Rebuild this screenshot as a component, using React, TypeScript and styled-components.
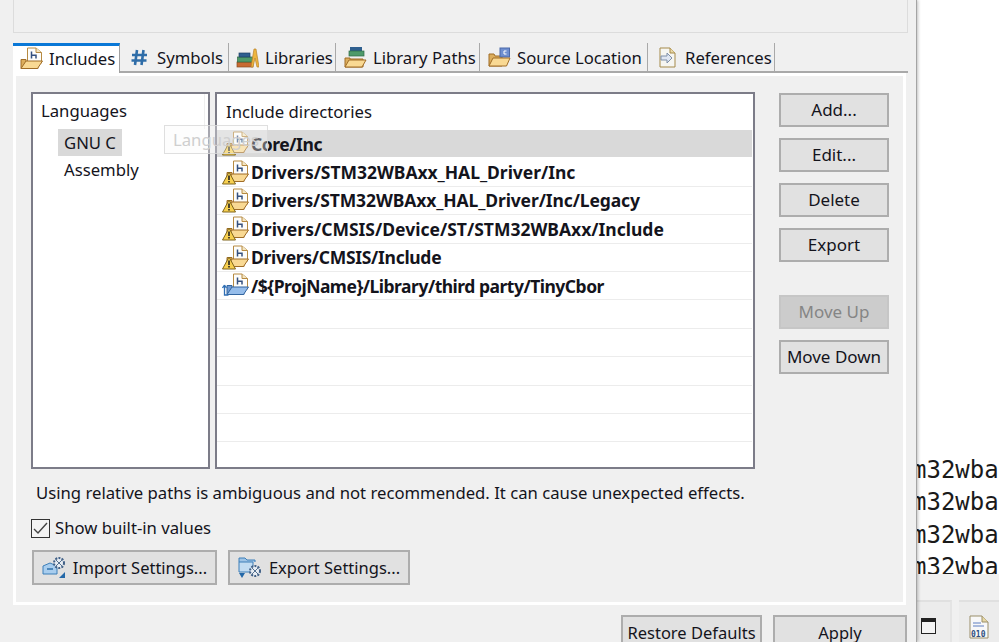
import React from "react";
import styled, { createGlobalStyle } from "styled-components";

const Global = createGlobalStyle`
  html, body { margin: 0; padding: 0; background: #f0f0f0; }
  body { font-family: "Noto Sans", "Open Sans", sans-serif; color: #14141c; }
`;

const Screen = styled.div`
  width: 999px; height: 642px; display: flex; overflow: hidden; font-size: 16.7px;
`;
const Dialog = styled.div`
  width: 916px; flex: none; height: 642px; box-sizing: border-box; padding: 0 8px 0 13px;
  background: #f0f0f0; display: flex; flex-direction: column; position: relative; z-index: 1;
  box-shadow: 1px 0 0 #a4a4a4, 2px 0 3px rgba(0, 0, 0, 0.25);
`;
const TopGroup = styled.div`
  height: 33px; flex: none; box-sizing: border-box;
  border: 1px solid #dcdcdc; border-top: 0;
`;
const TabBar = styled.div`
  margin-top: 10px; height: 30px; flex: none; display: flex; box-sizing: border-box;
  border-bottom: 2px solid #a9a9a9; font-size: 16.7px;
`;
const Tab = styled.div<{ $w: number; $active?: boolean; $gap: number; $pad: number }>`
  width: ${(p) => p.$w}px; flex: none; box-sizing: border-box; display: flex; align-items: center;
  gap: ${(p) => p.$gap}px; padding-left: ${(p) => p.$pad}px; white-space: nowrap;
  border-right: 1px solid #a9a9a9;
  ${(p) => p.$active
    ? `background:#fff;border-top:3px solid #0a78d7;height:30px;margin-bottom:-2px;padding-bottom:3px;border-right:1px solid #a0a0a0;`
    : `height:28px;`}
`;
const Panel = styled.div`
  margin-right: 2px; height: 532px; flex: none; box-sizing: border-box;
  border: 3px solid #fff; padding: 16px 0 0 15px; background: #f0f0f0; position: relative;
`;
const Lists = styled.div`
  display: flex; align-items: flex-start;
`;
const ListBox = styled.div<{ $w: number; $gap?: number }>`
  width: ${(p) => p.$w}px; height: 377px; flex: none; box-sizing: border-box; background: #fff;
  border: 2px solid #7c7c88; margin-right: ${(p) => p.$gap ?? 0}px; overflow: hidden;
`;
const LangHead = styled.div`
  height: 35px; line-height: 33px; padding-left: 8px; width: 163px; border-right: 1px solid #efefef;
`;
const LangItem = styled.div<{ $sel?: boolean }>`
  margin-left: 25px; width: fit-content; height: 27px; line-height: 27px; padding: 0 6px;
  background: ${(p) => (p.$sel ? "#d9d9d9" : "transparent")};
`;
const TreeHead = styled.div`
  height: 36px; line-height: 35px; padding-left: 9px;
`;
const TreeRow = styled.div<{ $sel?: boolean; $track: number }>`
  height: 28.4px; box-sizing: border-box; display: flex; align-items: center; margin-right: 1px;
  padding-left: 5px; gap: 2px; font-weight: 700; font-size: 17.5px; white-space: nowrap;
  letter-spacing: ${(p) => p.$track}px;
  background: ${(p) => (p.$sel ? "#d9d9d9" : "#fff")};
  border-bottom: 1px solid ${(p) => (p.$sel ? "#fff" : "#ececec")};
`;
const SideButtons = styled.div`
  margin-left: 24px; padding-top: 1px; display: flex; flex-direction: column; width: 110px; gap: 11px;
  font-size: 17px;
`;
const Btn = styled.div<{ $off?: boolean; $w?: number; $h?: number }>`
  width: ${(p) => (p.$w ? `${p.$w}px` : "100%")}; height: ${(p) => p.$h ?? 34}px; flex: none;
  box-sizing: border-box; display: flex; align-items: center; justify-content: center; gap: 7px;
  white-space: nowrap; padding-bottom: 1px;
  background: ${(p) => (p.$off ? "#cccccc" : "#e1e1e1")};
  border: 2px solid ${(p) => (p.$off ? "#c6c6c6" : "#adadad")};
  color: ${(p) => (p.$off ? "#858585" : "#14141c")};
`;
const Spacer = styled.div`height: 11px;`;
const Message = styled.div`
  margin-top: 12px; padding-left: 5px; height: 24px; line-height: 24px; white-space: nowrap;
`;
const CheckRow = styled.div`
  margin-top: 14px; display: flex; align-items: flex-start; gap: 5px; height: 20px; line-height: 18px;
`;
const Check = styled.div`
  width: 19px; height: 19px; box-sizing: border-box; background: #f4f4f4; border: 1.5px solid #333;
  display: flex; align-items: center; justify-content: center;
`;
const SettingsRow = styled.div`
  margin-top: 11px; margin-left: 1px; display: flex; gap: 11px; font-size: 16.5px;
`;
const Ghost = styled.div`
  position: absolute; left: 148px; top: 49px; width: 104px; height: 29px; box-sizing: border-box;
  background: rgba(250, 250, 250, 0.35); border: 1px solid rgba(215, 215, 215, 0.8);
  color: #cfcfcf; padding-left: 8px; line-height: 27px; overflow: hidden;
`;
const Footer = styled.div`
  margin-top: 10px; display: flex; justify-content: flex-end; gap: 11px; padding-right: 1px;
  font-size: 16.5px;
`;
const Editor = styled.div`
  flex: 1; min-width: 0; display: flex; flex-direction: column; background: #fff;
`;
const Code = styled.div`
  height: 574px; flex: none; box-sizing: border-box; padding-top: 454px; overflow: hidden; background: #fff;
  font-family: "DejaVu Sans Mono", monospace; font-size: 24px; line-height: 32.3px; white-space: nowrap;
  text-indent: -4px; color: #1a1a1a;
`;
const StatusArea = styled.div`
  flex: 1; background: #f0f0f0; padding-top: 26px; display: flex; gap: 7px; box-sizing: border-box;
`;
const StatusCell = styled.div<{ $w: number }>`
  width: ${(p) => p.$w}px; flex: none; box-sizing: border-box; border-top: 2px solid #e0e0e0;
  border-right: 2px solid #e4e4e4; padding-top: 16px; display: flex; background: #ececec;
`;
const WindowIcon = styled.div`
  width: 15px; height: 16px; box-sizing: border-box; border: 1.5px solid #222; border-top-width: 4px;
  margin-left: 5px; background: #f4f4f4;
`;

const HPage = () => (
  <>
    <path d="M8.5 1H17l5.5 4.5V16H8.5z" fill="#fdfdfb" stroke="#b68a42" />
    <path d="M17 1v4.5h5.5" fill="#f4e6c2" stroke="#b68a42" />
    <path d="M12.5 4.5v7M12.5 8.2h4.5v3.3" fill="none" stroke="#34507f" strokeWidth="1.5" />
  </>
);
const Folder = ({ blue }: { blue?: boolean }) => (
  <>
    <path d="M2 21.5v-9h5v2h12v7z" fill={blue ? "#6f9ad2" : "#dcae5d"} stroke={blue ? "#33659f" : "#a06d27"} />
    <path d="M2 21.5l5-7.5h16.5l-5 7.5z" fill={blue ? "#96bdea" : "#f9d993"} stroke={blue ? "#33659f" : "#a06d27"} />
  </>
);
const IncludeIcon = () => (
  <svg width="24" height="23" viewBox="0 0 24 23"><HPage /><Folder /></svg>
);
const WarnFolder = ({ blue }: { blue?: boolean }) => (
  <svg width="27" height="25" viewBox="0 0 27 25" style={{ flex: "none" }}>
    <g transform="translate(3 0)"><HPage /><Folder blue={blue} /></g>
    {blue ? (
      <path d="M2.5 12v10h4M2.5 12L.5 15M2.5 12l2 3" fill="none" stroke="#2f6fb5" strokeWidth="1.3" />
    ) : (
      <>
        <path d="M7 12l6.5 12H.5z" fill="#f7d050" stroke="#7f651c" />
        <path d="M7 15.5v4.5M7 21v1.6" stroke="#222" strokeWidth="1.6" />
      </>
    )}
  </svg>
);
const HashIcon = () => (
  <svg width="17" height="17" viewBox="0 0 17 17">
    <path d="M6 1L4 16M12.5 1l-2 15M1 6h15M.5 11.5h15" stroke="#2f6da8" strokeWidth="2.6" fill="none" />
  </svg>
);
const LibIcon = () => (
  <svg width="23" height="21" viewBox="0 0 23 21">
    <rect x="1" y="15" width="16" height="5" fill="#c86a32" stroke="#8a4a20" strokeWidth=".7" />
    <rect x="1.5" y="10" width="15" height="5" fill="#4f9a6a" stroke="#2f6a45" strokeWidth=".7" />
    <rect x="3" y="6" width="11" height="4" fill="#2f5f8f" stroke="#1f3f65" strokeWidth=".7" />
    <path d="M15 20l3-18h2l3 18h-2l-2-9-2 9z" fill="#eeb53e" stroke="#b9832a" strokeWidth=".7" />
  </svg>
);
const LibFolderIcon = () => (
  <svg width="23" height="22" viewBox="0 0 23 22">
    <rect x="6" y="1" width="12" height="4" fill="#2f5f8f" />
    <rect x="5" y="5" width="15" height="5" fill="#4f9a6a" stroke="#2f6a45" strokeWidth=".7" />
    <path d="M1 21v-9h5v1h13v8z" fill="#dcae5d" stroke="#a06d27" />
    <path d="M1 21l4-7h17l-4 7z" fill="#f9d993" stroke="#a06d27" />
  </svg>
);
const SourceIcon = () => (
  <svg width="23" height="20" viewBox="0 0 23 20">
    <path d="M1 19V7h5l1 2h7v10z" fill="#dcae5d" stroke="#a06d27" />
    <rect x="12" y="1" width="9.5" height="9" fill="#6f8fd0" stroke="#4a68a8" />
    <path d="M18.5 4h-2.5v3h2.5" fill="none" stroke="#fff" />
    <path d="M1 19l4-8h17l-3.5 8z" fill="#f9d993" stroke="#a06d27" />
  </svg>
);
const RefIcon = () => (
  <svg width="17" height="21" viewBox="0 0 17 21">
    <path d="M1 1h10l5 5v14H1z" fill="#f6f6f2" stroke="#a58a4a" />
    <path d="M11 1v5h5" fill="#ead9a8" stroke="#a58a4a" />
    <path d="M2 9h6V6l5 5-5 5v-3H2z" fill="#dfe6f2" stroke="#7f8fa8" />
  </svg>
);
const Gear = ({ x, y }: { x: number; y: number }) => (
  <g transform={`translate(${x} ${y})`}>
    <circle cx="6" cy="6" r="5" fill="#e8edf3" stroke="#3f5f86" strokeWidth="2" strokeDasharray="2 1.2" />
    <path d="M2.5 2.5l7 7M9.5 2.5l-7 7" stroke="#55718f" strokeWidth="1" />
  </g>
);
const ImportIcon = () => (
  <svg width="24" height="23" viewBox="0 0 24 23">
    <path d="M1 18V10l7-3 7 3v8z" fill="#a8cdee" stroke="#3d7fb8" />
    <path d="M5 13h6" stroke="#2f6fa8" strokeWidth="1.5" />
    <Gear x={11} y={1} />
    <path d="M23 16v6h-6z" fill="#2468a8" />
  </svg>
);
const ExportIcon = () => (
  <svg width="24" height="23" viewBox="0 0 24 23">
    <path d="M1 6V2h6l2 2h8v2" fill="#9fc4e6" stroke="#3d7fb8" />
    <path d="M1 6h14v10H1z" fill="#c2dcf2" stroke="#3d7fb8" />
    <Gear x={11} y={9} />
    <path d="M1 17h6l-3 5z" fill="#2468a8" />
  </svg>
);
const FileIcon = () => (
  <svg width="20" height="24" viewBox="0 0 20 24" style={{ marginLeft: 10, marginTop: -3 }}>
    <path d="M1 1h12l6 6v16H1z" fill="#f8f8f8" stroke="#9a8f6a" />
    <path d="M13 1v6h6" fill="#e7d8a6" stroke="#9a8f6a" />
    <path d="M4 8h8M4 11h11" stroke="#5f7fc0" />
    <text x="2" y="22" fontSize="8" fontFamily="'DejaVu Sans Mono', monospace" fontWeight="700" fill="#2f4f7f">010</text>
  </svg>
);

const rows: { text: string; track: number }[] = [
  { text: "Core/Inc", track: -0.45 },
  { text: "Drivers/STM32WBAxx_HAL_Driver/Inc", track: -0.04 },
  { text: "Drivers/STM32WBAxx_HAL_Driver/Inc/Legacy", track: -0.12 },
  { text: "Drivers/CMSIS/Device/ST/STM32WBAxx/Include", track: 0 },
  { text: "Drivers/CMSIS/Include", track: -0.3 },
  { text: "/${ProjName}/Library/third party/TinyCbor", track: -0.5 },
  ...Array.from({ length: 6 }, () => ({ text: "", track: 0 })),
];

export default function App() {
  return (
    <Screen>
      <Global />
      <Dialog>
        <TopGroup />
        <TabBar>
          <Tab $w={107} $active $gap={6} $pad={6}><IncludeIcon />Includes</Tab>
          <Tab $w={109} $gap={9} $pad={11}><HashIcon />Symbols</Tab>
          <Tab $w={107} $gap={6} $pad={7}><LibIcon />Libraries</Tab>
          <Tab $w={144} $gap={6} $pad={8}><LibFolderIcon />Library Paths</Tab>
          <Tab $w={168} $gap={6} $pad={8}><SourceIcon />Source Location</Tab>
          <Tab $w={127} $gap={9} $pad={11}><RefIcon />References</Tab>
        </TabBar>
        <Panel>
          <Lists>
            <ListBox $w={179} $gap={5}>
              <LangHead>Languages</LangHead>
              <LangItem $sel>GNU C</LangItem>
              <LangItem>Assembly</LangItem>
            </ListBox>
            <ListBox $w={540}>
              <TreeHead>Include directories</TreeHead>
              {rows.map((r, i) => (
                <TreeRow key={i} $sel={i === 0} $track={r.track}>
                  {r.text && <WarnFolder blue={i === 5} />}
                  {r.text}
                </TreeRow>
              ))}
            </ListBox>
            <SideButtons>
              <Btn>Add...</Btn>
              <Btn>Edit...</Btn>
              <Btn>Delete</Btn>
              <Btn>Export</Btn>
              <Spacer />
              <Btn $off>Move Up</Btn>
              <Btn>Move Down</Btn>
            </SideButtons>
          </Lists>
          <Message>Using relative paths is ambiguous and not recommended. It can cause unexpected effects.</Message>
          <CheckRow>
            <Check>
              <svg width="15" height="13" viewBox="0 0 15 13">
                <path d="M1 7l4 4 9-10" fill="none" stroke="#444" strokeWidth="1.4" />
              </svg>
            </Check>
            Show built-in values
          </CheckRow>
          <SettingsRow>
            <Btn $w={185} $h={35}><ImportIcon />Import Settings...</Btn>
            <Btn $w={182} $h={35}><ExportIcon />Export Settings...</Btn>
          </SettingsRow>
          <Ghost>Languages</Ghost>
        </Panel>
        <Footer>
          <Btn $w={141} $h={35}>Restore Defaults</Btn>
          <Btn $w={134} $h={35}>Apply</Btn>
        </Footer>
      </Dialog>
      <Editor>
        <Code>
          <div>m32wba</div>
          <div>m32wba</div>
          <div>m32wba</div>
          <div>m32wba</div>
        </Code>
        <StatusArea>
          <StatusCell $w={36}><WindowIcon /></StatusCell>
          <StatusCell $w={46}><FileIcon /></StatusCell>
        </StatusArea>
      </Editor>
    </Screen>
  );
}
